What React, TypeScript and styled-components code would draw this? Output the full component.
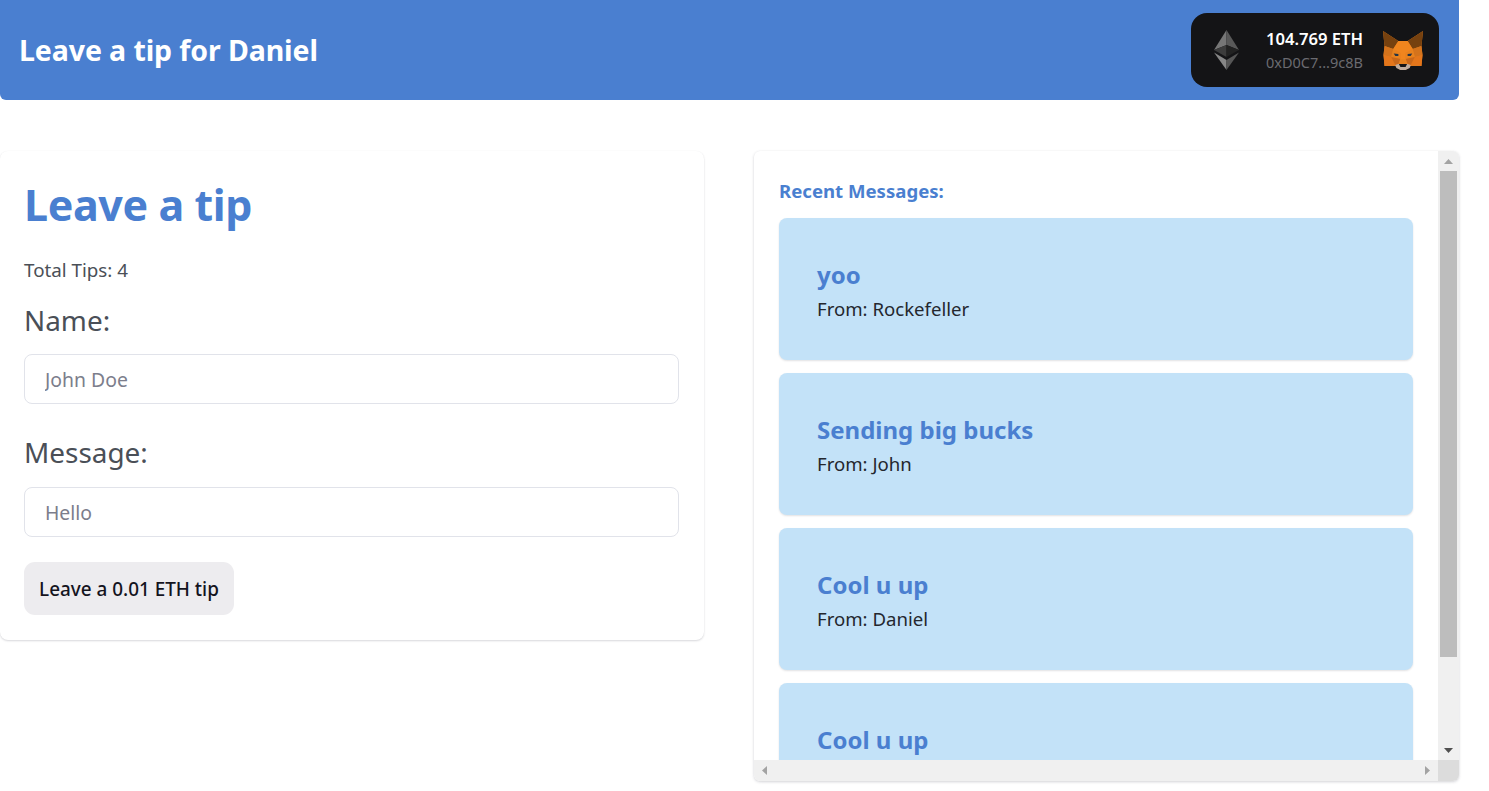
import React from "react";
import styled, { createGlobalStyle } from "styled-components";

const Global = createGlobalStyle`
  html, body { margin: 0; padding: 0; background: #fff; height: 100%; overflow: hidden; }
  body { font-family: "Noto Sans", "Open Sans", sans-serif; }
  * { box-sizing: border-box; }
`;

const Page = styled.div`
  width: 1459px;
`;

const Header = styled.header`
  height: 100px;
  background: #4a7fd0;
  border-radius: 0 0 6px 6px;
  display: flex;
  align-items: center;
  justify-content: space-between;
  padding: 0 20px 0 19px;
`;

const Brand = styled.h2`
  margin: 0;
  color: #fff;
  font-size: 28.5px;
  font-weight: 700;
  letter-spacing: -0.1px;
`;

const Wallet = styled.div`
  width: 248px;
  height: 74px;
  background: #141416;
  border-radius: 16px;
  display: flex;
  align-items: center;
  padding: 0 16px 0 23px;
`;

const WalletInfo = styled.div`
  flex: 1;
  padding-left: 27px;
  display: flex;
  flex-direction: column;
  gap: 3px;
`;

const Balance = styled.span`
  color: #fff;
  font-size: 16.6px;
  font-weight: 600;
  line-height: 21px;
`;

const Address = styled.span`
  color: #6b6b70;
  font-size: 14.5px;
  line-height: 20px;
`;

const Columns = styled.main`
  display: grid;
  grid-template-columns: 704px 705px;
  column-gap: 50px;
  align-items: start;
  margin-top: 51px;
`;

const TipCard = styled.section`
  height: 489px;
  background: #fff;
  border-radius: 8px;
  box-shadow: 0 1px 2px rgba(40, 40, 60, 0.18), 0 0 1px rgba(40, 40, 60, 0.04);
  padding: 25px 25px 0 24px;
`;

const Title = styled.h1`
  margin: 0;
  color: #4a7fd0;
  font-size: 43px;
  font-weight: 700;
  line-height: 58px;
  letter-spacing: -0.4px;
`;

const Total = styled.p`
  margin: 23px 0 0;
  color: #4a4f57;
  font-size: 18.8px;
  line-height: 26px;
`;

const Field = styled.label`
  display: block;
`;

const FieldLabel = styled.span`
  display: block;
  color: #4a4f57;
  font-size: 27.9px;
  line-height: 36px;
`;

const NameField = styled(Field)`
  margin-top: 19px;
  ${FieldLabel} { margin-bottom: 16px; }
`;

const MessageField = styled(Field)`
  margin-top: 30px;
  ${FieldLabel} { margin-bottom: 17px; }
`;

const TextInput = styled.input`
  display: block;
  width: 100%;
  height: 50px;
  border: 1px solid #e1e3ea;
  border-radius: 8px;
  padding: 0 20px;
  font: inherit;
  font-size: 19.4px;
  outline: none;
  background: #fff;
  &::placeholder { color: #7c7e8c; opacity: 1; }
`;

const TipButton = styled.button`
  display: block;
  margin-top: 25px;
  width: 210px;
  height: 53px;
  border: none;
  border-radius: 11px;
  background: #edecef;
  color: #14141e;
  font: inherit;
  font-size: 18.9px;
  font-weight: 500;
  padding: 0;
`;

const ScrollPane = styled.section`
  height: 630px;
  background: #fff;
  border-radius: 6px;
  box-shadow: 0 1px 3px rgba(40, 40, 60, 0.2), 0 0 1px rgba(40, 40, 60, 0.05);
  display: grid;
  grid-template-columns: 684px 21px;
  grid-template-rows: 609px 21px;
  overflow: hidden;
`;

const Feed = styled.div`
  overflow: hidden;
  padding: 26px 25px 0 25px;
`;

const FeedTitle = styled.h3`
  margin: 0 0 13px;
  color: #4a7fd0;
  font-size: 18.6px;
  font-weight: 700;
  line-height: 28px;
`;

const MessageList = styled.div`
  display: flex;
  flex-direction: column;
  gap: 13px;
`;

const MessageCard = styled.article`
  flex: none;
  height: 142px;
  background: #c3e2f8;
  border-radius: 8px;
  box-shadow: 0 1px 2px rgba(40, 40, 60, 0.14);
  padding: 40px 38px 0;
`;

const MessageText = styled.h4`
  margin: 0;
  color: #4a7fd0;
  font-size: 24px;
  font-weight: 700;
  line-height: 34px;
`;

const MessageFrom = styled.p`
  margin: 1px 0 0;
  color: #24272e;
  font-size: 18.6px;
  line-height: 32px;
`;

const VBar = styled.div`
  background: #f0f0f0;
  display: flex;
  flex-direction: column;
  align-items: center;
`;

const VButton = styled.div`
  flex: none;
  height: 20px;
  width: 100%;
  display: flex;
  align-items: center;
  justify-content: center;
`;

const VThumb = styled.div`
  flex: none;
  width: 17px;
  height: 486px;
  background: #bdbdbd;
`;

const VSpacer = styled.div`
  flex: 1;
`;

const HBar = styled.div`
  background: #f0f0f0;
  display: flex;
  align-items: center;
  justify-content: space-between;
  padding: 0 8px;
`;

const Corner = styled.div`
  background: #dcdcdc;
`;

const Arrow = ({ dir, fill }: { dir: "up" | "down" | "left" | "right"; fill: string }) => {
  const pts = {
    up: "0,5 9,5 4.5,0",
    down: "0,0 9,0 4.5,5",
    left: "5,0 5,9 0,4.5",
    right: "0,0 0,9 5,4.5",
  }[dir];
  const horizontal = dir === "left" || dir === "right";
  return (
    <svg width={horizontal ? 5 : 9} height={horizontal ? 9 : 5} viewBox={horizontal ? "0 0 5 9" : "0 0 9 5"}>
      <polygon points={pts} fill={fill} />
    </svg>
  );
};

const EthLogo = () => (
  <svg width="25" height="40" viewBox="0 0 25 40">
    <polygon points="12.5,0 12.5,15 0,20" fill="#767676" />
    <polygon points="12.5,0 25,20 12.5,15" fill="#595959" />
    <polygon points="12.5,15 0,20 12.5,27" fill="#3c3c3c" />
    <polygon points="12.5,15 25,20 12.5,27" fill="#222222" />
    <polygon points="0,22.5 12.5,30 12.5,40" fill="#878787" />
    <polygon points="25,22.5 12.5,30 12.5,40" fill="#565656" />
  </svg>
);

const foxLeft: [string, string][] = [
  ["0,0 15,10 10,18 1.5,15", "#76410f"],
  ["1.5,15 10,18 8,26 0.5,24", "#d4731c"],
  ["10,18 17,22 17,28 8,26", "#e8821e"],
  ["0.5,24 8,26 12,34 1.5,35", "#e4761b"],
  ["8,26 17,28 15,33 12,34", "#c9681a"],
];

const FoxLogo = () => (
  <svg width="40" height="39" viewBox="0 0 39 39" preserveAspectRatio="none">
    <polygon points="0,0 15,10 24,10 39,0 37.5,15 38.5,24 37.5,35 27,35 22,39 17,39 12,35 1.5,35 0.5,24 1.5,15" fill="#e27b1c" />
    {foxLeft.map(([p, c]) => (
      <polygon key={p} points={p} fill={c} />
    ))}
    <g transform="translate(39 0) scale(-1 1)">
      {foxLeft.map(([p, c]) => (
        <polygon key={p} points={p} fill={c} />
      ))}
    </g>
    <polygon points="15,10 24,10 29,18 22,22 17,22 10,18" fill="#f0851e" />
    <polygon points="17,22 22,22 22,28 17,28" fill="#f0851e" />
    <polygon points="17,28 22,28 24,33 15,33" fill="#e8821e" />
    <polygon points="12,34 15,33 24,33 27,34 26,37 22,39 17,39 13,37" fill="#c0ad9e" />
    <polygon points="15.5,33 23.5,33 22,36 17,36" fill="#161616" />
    <polygon points="10.5,22.5 15,23 15,25 12,25" fill="#233447" />
    <polygon points="28.5,22.5 24,23 24,25 27,25" fill="#233447" />
  </svg>
);

const messages = [
  { text: "yoo", from: "Rockefeller" },
  { text: "Sending big bucks", from: "John" },
  { text: "Cool u up", from: "Daniel" },
  { text: "Cool u up", from: "Daniel" },
];

export default function App() {
  return (
    <Page>
      <Global />
      <Header>
        <Brand>Leave a tip for Daniel</Brand>
        <Wallet>
          <EthLogo />
          <WalletInfo>
            <Balance>104.769 ETH</Balance>
            <Address>0xD0C7...9c8B</Address>
          </WalletInfo>
          <FoxLogo />
        </Wallet>
      </Header>
      <Columns>
        <TipCard>
          <Title>Leave a tip</Title>
          <Total>Total Tips: 4</Total>
          <NameField>
            <FieldLabel>Name:</FieldLabel>
            <TextInput placeholder="John Doe" />
          </NameField>
          <MessageField>
            <FieldLabel>Message:</FieldLabel>
            <TextInput placeholder="Hello" />
          </MessageField>
          <TipButton>Leave a 0.01 ETH tip</TipButton>
        </TipCard>
        <ScrollPane>
          <Feed>
            <FeedTitle>Recent Messages:</FeedTitle>
            <MessageList>
              {messages.map((m, i) => (
                <MessageCard key={i}>
                  <MessageText>{m.text}</MessageText>
                  <MessageFrom>From: {m.from}</MessageFrom>
                </MessageCard>
              ))}
            </MessageList>
          </Feed>
          <VBar>
            <VButton><Arrow dir="up" fill="#a3a3a3" /></VButton>
            <VThumb />
            <VSpacer />
            <VButton><Arrow dir="down" fill="#505050" /></VButton>
          </VBar>
          <HBar>
            <Arrow dir="left" fill="#a3a3a3" />
            <Arrow dir="right" fill="#a3a3a3" />
          </HBar>
          <Corner />
        </ScrollPane>
      </Columns>
    </Page>
  );
}
